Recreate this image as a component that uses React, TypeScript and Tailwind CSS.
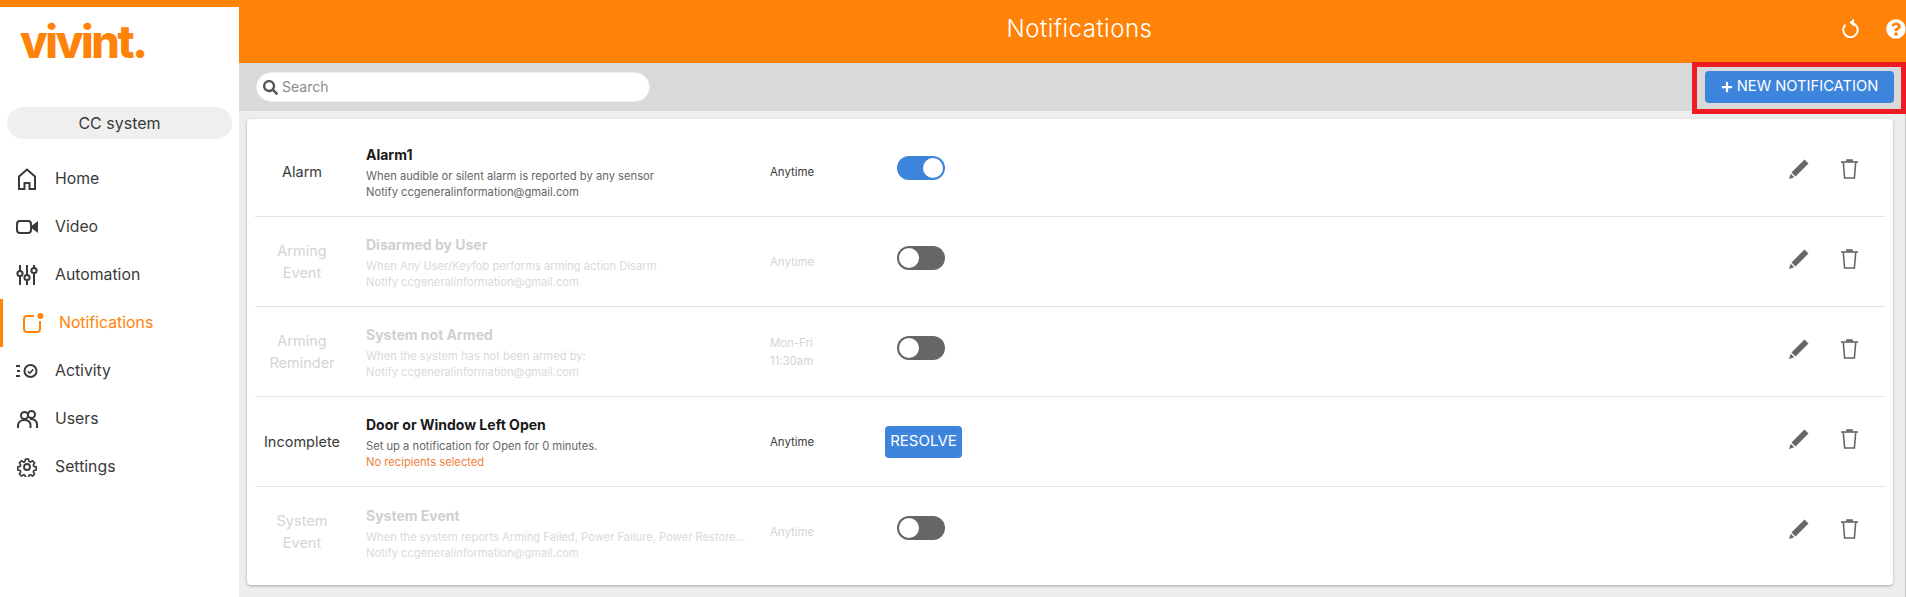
import { FaPlus, FaQuestionCircle, FaSearch } from 'react-icons/fa'

const font = { fontFamily: 'Inter, "Noto Sans", sans-serif' }

function HomeIcon() {
  return (
    <svg width="20" height="22" viewBox="0 0 20 22" fill="none" stroke="#3a3a3a" strokeWidth="2">
      <path d="M2 21V8.5L10 1.5l8 7V21h-5.5v-6h-5v6z" />
    </svg>
  )
}

function VideoIcon() {
  return (
    <svg width="22" height="14" viewBox="0 0 22 14">
      <rect x="1" y="1" width="14" height="12" rx="3" fill="none" stroke="#3a3a3a" strokeWidth="2" />
      <path d="M16 5.5 22 1v12l-6-4.5z" fill="#3a3a3a" />
    </svg>
  )
}

function SlidersIcon() {
  return (
    <svg width="22" height="20" viewBox="0 0 22 20" fill="none" stroke="#3a3a3a" strokeWidth="2">
      <path d="M4 0v6M4 11v9M11 0v10M11 15v5M18 0v3M18 8v12" />
      <circle cx="4" cy="8.5" r="2.6" />
      <circle cx="11" cy="12.5" r="2.6" />
      <circle cx="18" cy="5.5" r="2.6" />
    </svg>
  )
}

function BellIcon() {
  return (
    <svg width="21" height="20" viewBox="0 0 21 20" fill="none">
      <path d="M11 3H4a3 3 0 0 0-3 3v10a3 3 0 0 0 3 3h10a3 3 0 0 0 3-3V8" stroke="#ff8308" strokeWidth="2" />
      <circle cx="17.5" cy="3" r="3" fill="#ff8308" />
    </svg>
  )
}

function ActivityIcon() {
  return (
    <svg width="22" height="14" viewBox="0 0 22 14" fill="none" stroke="#3a3a3a" strokeWidth="2">
      <path d="M0 2h4M1 7h3M0 12h4" />
      <circle cx="14.5" cy="7" r="6" />
      <path d="m11.8 7.2 2 2 3.4-3.8" strokeWidth="1.6" />
    </svg>
  )
}

function UsersIcon() {
  return (
    <svg width="21" height="19" viewBox="0 0 21 19" fill="none" stroke="#3a3a3a" strokeWidth="2">
      <circle cx="7.5" cy="5.5" r="3.5" />
      <circle cx="14.5" cy="4.5" r="3.5" />
      <path d="M1 18v-2.5C1 12 4 10 7.5 10s6 2 6 5.5V18M13 9c4-.5 7 2 7 5.5V18" />
    </svg>
  )
}

function GearIcon() {
  return (
    <svg width="20" height="20" viewBox="0 0 24 24" fill="none" stroke="#3a3a3a" strokeWidth="2.2" strokeLinejoin="round">
      <path d="M10 1.5h4l.7 3.2 1.9.8 2.8-1.8 2.8 2.8-1.8 2.8.8 1.9 3.1.7v4l-3.1.7-.8 1.9 1.8 2.8-2.8 2.8-2.8-1.8-1.9.8-.7 3.1h-4l-.7-3.1-1.9-.8-2.8 1.8-2.8-2.8 1.8-2.8-.8-1.9-3.1-.7v-4l3.1-.7.8-1.9-1.8-2.8 2.8-2.8 2.8 1.8 1.9-.8z" transform="translate(1.2 1.2) scale(.9)" />
      <circle cx="12" cy="12" r="3.6" />
    </svg>
  )
}

function RefreshIcon() {
  return (
    <svg width="17" height="20" viewBox="0 0 17 20" fill="none" stroke="white" strokeWidth="2">
      <path d="M10 5A7.2 7.2 0 1 1 3.5 6.8" />
      <path d="M7.5 4.5 12 0.5v8z" fill="white" stroke="none" />
    </svg>
  )
}

function PencilIcon() {
  return (
    <svg width="20" height="20" viewBox="0 0 20 20" fill="#666">
      <path d="M15.5 0.5 19.5 4.5 6.5 17.5 2.5 13.5z" />
      <path d="M1.8 14.8 5.2 18.2 0 20z" />
    </svg>
  )
}

function TrashIcon() {
  return (
    <svg width="17" height="20" viewBox="0 0 17 20" fill="none" stroke="#666" strokeWidth="1.6">
      <path d="M0 3h17" />
      <path d="M6 2.5V1h5v1.5" fill="#666" />
      <path d="M2.3 3.5 3.6 19h9.8l1.3-15.5" />
    </svg>
  )
}

function Toggle({ on }: { on: boolean }) {
  return (
    <div className={`w-12 h-6 rounded-full p-[2px] flex ${on ? 'bg-[#3d85dc] justify-end' : 'bg-[#666666] justify-start'}`}>
      <div className="w-5 h-5 rounded-full bg-white" />
    </div>
  )
}

const nav = [
  { label: 'Home', icon: <HomeIcon /> },
  { label: 'Video', icon: <VideoIcon /> },
  { label: 'Automation', icon: <SlidersIcon /> },
  { label: 'Notifications', icon: <BellIcon />, active: true },
  { label: 'Activity', icon: <ActivityIcon /> },
  { label: 'Users', icon: <UsersIcon /> },
  { label: 'Settings', icon: <GearIcon /> },
]

const rows = [
  { type: ['Alarm'], title: 'Alarm1', desc: 'When audible or silent alarm is reported by any sensor', sub: 'Notify ccgeneralinformation@gmail.com', time: ['Anytime'], toggle: true },
  { type: ['Arming', 'Event'], title: 'Disarmed by User', desc: 'When Any User/Keyfob performs arming action Disarm', sub: 'Notify ccgeneralinformation@gmail.com', time: ['Anytime'], toggle: false, dim: true },
  { type: ['Arming', 'Reminder'], title: 'System not Armed', desc: 'When the system has not been armed by:', sub: 'Notify ccgeneralinformation@gmail.com', time: ['Mon-Fri', '11:30am'], toggle: false, dim: true },
  { type: ['Incomplete'], title: 'Door or Window Left Open', desc: 'Set up a notification for Open for 0 minutes.', sub: 'No recipients selected', time: ['Anytime'], resolve: true },
  { type: ['System', 'Event'], title: 'System Event', desc: 'When the system reports Arming Failed, Power Failure, Power Restore...', sub: 'Notify ccgeneralinformation@gmail.com', time: ['Anytime'], toggle: false, dim: true },
]

export default function App() {
  return (
    <div className="relative w-[1906px] h-[597px] overflow-hidden flex bg-[#ff8308] text-[#3a3a3a]" style={font}>
      <aside className="w-[239px] mt-[7px] bg-white flex flex-col shrink-0">
        <div className="h-[50px] pl-[20px] pt-[10px] text-[#ff8308] text-[45px] leading-[50px] font-extrabold tracking-[-2.4px]">vivint.</div>
        <div className="mx-[7px] mt-[50px] h-8 rounded-full bg-[#efefef] flex items-center justify-center text-[16px]">CC system</div>
        <nav className="mt-4 flex flex-col">
          {nav.map((item) => (
            <div
              key={item.label}
              className={`h-12 flex items-center text-[15.8px] ${item.active ? 'border-l-[3px] border-[#ff8308] text-[#ff8308]' : ''}`}
            >
              <div className={`w-[22px] flex justify-center ${item.active ? 'ml-[19px] mr-[15px]' : 'ml-[16px] mr-[17px]'}`}>{item.icon}</div>
              {item.label}
            </div>
          ))}
        </nav>
      </aside>

      <main className="flex-1 min-w-0 flex flex-col">
        <header className="h-[63px] relative flex items-center justify-center text-white text-[24px] font-light tracking-[0.5px] pb-[6px]">
          <span className="mr-[-14px]">Notifications</span>
          <div className="absolute left-[1603px] top-[18px]"><RefreshIcon /></div>
          <div className="absolute left-[1647px] top-[19px]"><FaQuestionCircle size={20} color="white" /></div>
        </header>

        <div className="h-[48px] bg-[#d9d9d9] flex items-center justify-between pl-[17px] pr-3 pb-[1px]">
          <div className="w-[394px] h-[30px] rounded-full bg-white border border-[#eeeeee] flex items-center pl-[6px] gap-[4px] text-[14px] text-[#8a8a8a]">
            <FaSearch size={15} color="#555" className="mt-[2px]" />
            Search
          </div>
          <button className="w-[189px] h-8 rounded bg-[#3d85dc] text-white flex items-center justify-center gap-[4px] text-[14.7px]">
            <FaPlus size={12} />
            NEW NOTIFICATION
          </button>
        </div>

        <div className="flex-1 bg-[#eeeeee] pl-2 pr-3 pt-2 pb-3 border-r border-[#c8c8c8]">
          <div className="h-[466px] bg-white rounded shadow-[0_1px_3px_rgba(0,0,0,0.3)] px-2 pt-[8px]">
            {rows.map((row, i) => (
              <div key={row.title} className={`h-[90px] flex items-center ${i < rows.length - 1 ? 'border-b border-[#e2e2e2]' : ''}`}>
                <div className={`w-[94px] text-center text-[14.5px] leading-[22px] shrink-0 ${row.dim ? 'text-[#d4d4d4]' : ''}`}>
                  {row.type.map((t) => <div key={t}>{t}</div>)}
                </div>
                <div className="w-[404px] ml-[17px] pt-[3px] shrink-0 min-w-0">
                  <div className={`text-[14px] font-bold leading-[18px] mb-[4px] ${row.dim ? 'text-[#d0d0d0]' : 'text-[#1a1a1a]'}`}>{row.title}</div>
                  <div className={`text-[11.2px] leading-[16px] truncate ${row.dim ? 'text-[#dadada]' : 'text-[#666666]'}`}>{row.desc}</div>
                  <div className={`text-[11.2px] leading-[16px] ${row.resolve ? 'text-[#f0803c]' : row.dim ? 'text-[#dadada]' : 'text-[#666666]'}`}>{row.sub}</div>
                </div>
                <div className={`w-[116px] text-[11.4px] leading-[18px] shrink-0 ${row.dim ? 'text-[#d4d4d4]' : ''}`}>
                  {row.time.map((t) => <div key={t}>{t}</div>)}
                </div>
                {row.resolve ? (
                  <button className="w-[77px] h-8 ml-[-1px] rounded bg-[#3d85dc] text-white text-[15px] shrink-0">RESOLVE</button>
                ) : (
                  <div className="ml-[11px] mb-[8px] shrink-0"><Toggle on={!!row.toggle} /></div>
                )}
                <div className="ml-auto flex items-center gap-[32px] pr-[27px] mb-[6px]">
                  <PencilIcon />
                  <TrashIcon />
                </div>
              </div>
            ))}
          </div>
        </div>
      </main>

      {/* red annotation round the button */}
      <div className="absolute left-[1692px] top-[62px] w-[214px] h-[52px] border-[5px] border-[#ed1c24]" />
    </div>
  )
}
